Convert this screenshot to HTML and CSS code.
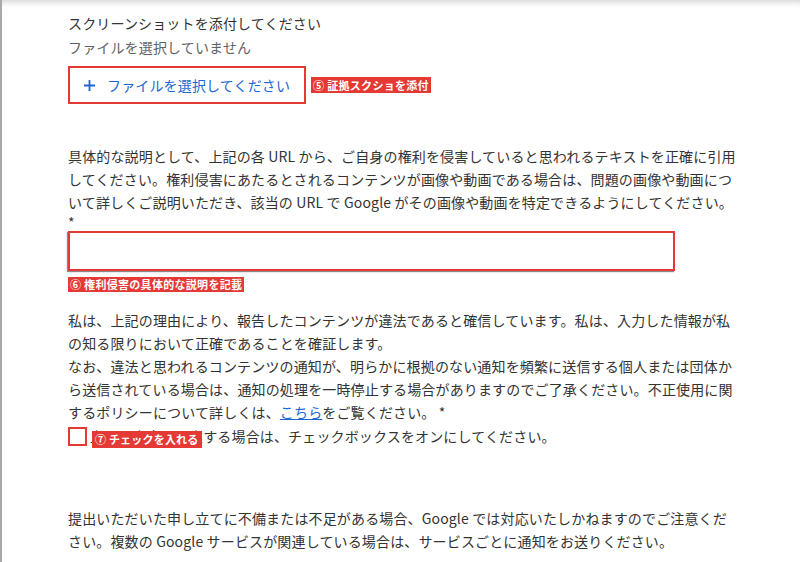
FILE: index.html
```html
<!DOCTYPE html>
<html lang="ja">
<head>
  <meta charset="utf-8">
  <title>著作権侵害の報告</title>
  <link rel="stylesheet" href="styles.css">
</head>
<body>
  <div class="page">
    <!-- attachment -->
    <div class="field">
      <div class="field-title">スクリーンショットを添付してください</div>
      <div class="field-hint">ファイルを選択していません</div>
      <div class="upload-row">
        <button type="button" class="upload-btn">
          <svg class="plus" width="11" height="11" viewBox="0 0 11 11"><path d="M5.5 0v11M0 5.5h11" stroke="#1a67d2" stroke-width="1.8" fill="none"/></svg>
          ファイルを選択してください
        </button>
        <span class="tag">⑤ 証拠スクショを添付</span>
      </div>
    </div>

    <!-- description -->
    <div class="field desc">
      <p class="text">具体的な説明として、上記の各 URL から、ご自身の権利を侵害していると思われるテキストを正確に引用<br>してください。権利侵害にあたるとされるコンテンツが画像や動画である場合は、問題の画像や動画につ<br>いて詳しくご説明いただき、該当の URL で Google がその画像や動画を特定できるようにしてください。</p>
      <div class="required">*</div>
      <textarea class="desc-input"></textarea>
      <div class="tag-line"><span class="tag">⑥ 権利侵害の具体的な説明を記載</span></div>
    </div>

    <!-- statement -->
    <div class="field statement">
      <p class="text">私は、上記の理由により、報告したコンテンツが違法であると確信しています。私は、入力した情報が私<br>の知る限りにおいて正確であることを確証します。<br>なお、違法と思われるコンテンツの通知が、明らかに根拠のない通知を頻繁に送信する個人または団体か<br>ら送信されている場合は、通知の処理を一時停止する場合がありますのでご了承ください。不正使用に関<br>するポリシーについて詳しくは、<a href="#" class="link">こちら</a>をご覧ください。 *</p>
      <label class="check-row">
        <input type="checkbox" class="check">
        <span>上記の内容に同意する場合は、チェックボックスをオンにしてください。</span>
        <span class="tag tag-over">⑦ チェックを入れる</span>
      </label>
    </div>

    <p class="text note">提出いただいた申し立てに不備または不足がある場合、Google では対応いたしかねますのでご注意くだ<br>さい。複数の Google サービスが関連している場合は、サービスごとに通知をお送りください。</p>
  </div>
</body>
</html>
```

FILE: styles.css
```css
html, body { margin: 0; padding: 0; background: #fff; }
body { font-family: "Noto Sans CJK JP", sans-serif; font-size: 14px; line-height: 23px; color: #333; letter-spacing: 0.15px; }
.page { min-height: 562px; border-left: 2px solid #a9a9a9; padding: 12px 0 0 66px; box-sizing: border-box; box-shadow: inset 0 7px 6px -5px rgba(0,0,0,0.18); }
.field-title { margin-bottom: 1px; }
.field-hint { color: #5f6368; }
.upload-row { display: flex; align-items: center; margin-top: 7px; }
.upload-btn { display: flex; align-items: center; gap: 12px; height: 38px; padding: 0 14px 0 14px; border: 2px solid #e53935; background: #fff; color: #1a67d2; font: inherit; letter-spacing: inherit; cursor: pointer; }
.tag { display: inline-block; background: #e53935; color: #fff; font-size: 11px; font-weight: bold; line-height: 16px; padding: 0 2px; letter-spacing: 0.3px; white-space: nowrap; }
.upload-row .tag { margin-left: 5px; }
.text { margin: 0; width: 700px; }
.desc { margin-top: 41px; }
.required { line-height: 17px; }
.desc-input { display: block; width: 607px; height: 40px; box-sizing: border-box; margin-top: 0; border: 2px solid #e53935; box-shadow: -1px 1px 1px #8a8a8a; resize: none; font: inherit; padding: 4px 8px; }
.tag-line { margin-top: 5px; line-height: 15px; }
.tag-line .tag { line-height: 15px; }
.statement { margin-top: 17px; }
.link { color: #1a67d2; }
.check-row { position: relative; display: flex; align-items: center; height: 23px; margin-top: 1px; }
.check { appearance: none; -webkit-appearance: none; width: 19px; height: 19px; margin: 0 3px 0 0; border: 2px solid #e53935; background: #fff; box-sizing: border-box; }
.tag-over { position: absolute; left: 24px; top: 6px; line-height: 17px; padding: 0 3px; letter-spacing: 0.2px; }
.note { margin-top: 59px; }
```
